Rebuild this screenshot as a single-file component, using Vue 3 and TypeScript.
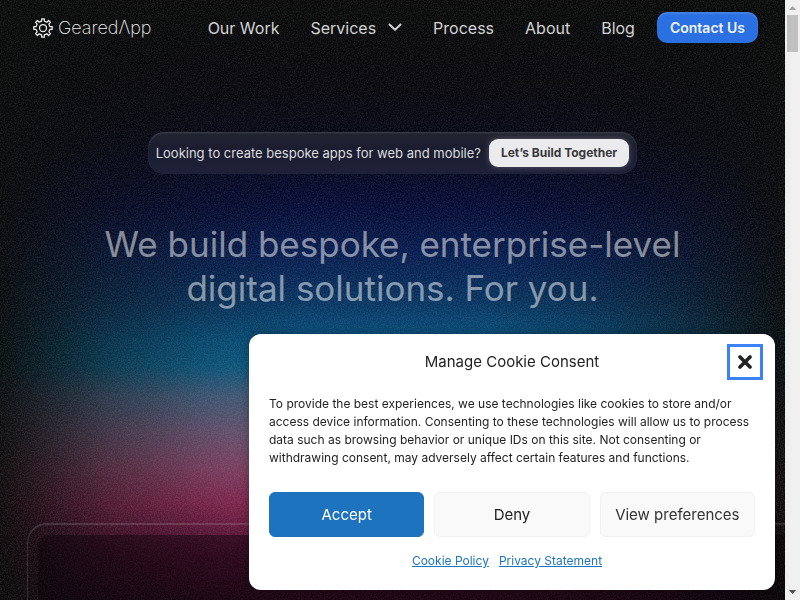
<script setup lang="ts">
import { ref } from 'vue'

interface NavItem {
  label: string
  menu?: boolean
}

const navItems: NavItem[] = [
  { label: 'Our Work' },
  { label: 'Services', menu: true },
  { label: 'Process' },
  { label: 'About' },
  { label: 'Blog' },
]

const consentOpen = ref(true)

// Outline of an eight-toothed cog centred in a 24 x 24 box.
function cogPath(teeth: number, outer: number, inner: number): string {
  const points: string[] = []
  const step = (Math.PI * 2) / teeth
  const at = (r: number, a: number) =>
    `${(12 + r * Math.sin(a)).toFixed(2)} ${(12 - r * Math.cos(a)).toFixed(2)}`
  for (let i = 0; i < teeth; i++) {
    const a = i * step
    points.push(at(inner, a - step * 0.25), at(outer, a - step * 0.18))
    points.push(at(outer, a + step * 0.18), at(inner, a + step * 0.25))
  }
  return `M${points.join('L')}Z`
}

const cog = cogPath(8, 11.2, 8.4)
</script>

<template>
  <div class="window">
    <div class="page">
      <svg class="grain" aria-hidden="true">
        <filter id="grain" color-interpolation-filters="sRGB">
          <feTurbulence type="fractalNoise" baseFrequency="0.7" numOctaves="3" stitchTiles="stitch" />
          <feColorMatrix values="0 0 0 0 1  0 0 0 0 1  0 0 0 0 1  3 0 0 0 -1.1" />
        </filter>
        <rect width="100%" height="100%" filter="url(#grain)" />
      </svg>

      <header class="topbar">
        <a class="brand" href="#">
          <svg class="cog" viewBox="0 0 24 24" aria-hidden="true">
            <path :d="cog" />
            <circle cx="12" cy="12" r="4.2" />
          </svg>
          <span>GearedΛpp</span>
        </a>
        <nav class="nav">
          <a v-for="item in navItems" :key="item.label" href="#">
            {{ item.label }}
            <svg v-if="item.menu" class="chevron" viewBox="0 0 14 9" aria-hidden="true">
              <path d="M1.5 1.5L7 6.8L12.5 1.5" />
            </svg>
          </a>
        </nav>
        <a class="contact" href="#">Contact Us</a>
      </header>

      <main class="hero">
        <div class="pill">
          <span>Looking to create bespoke apps for web and mobile?</span>
          <a class="pill-link" href="#">Let’s Build Together</a>
        </div>
        <h1>We build bespoke, enterprise-level<br />digital solutions. For you.</h1>
        <div class="showcase"><div class="showcase-screen"></div></div>
      </main>
    </div>

    <div class="scrollbar" aria-hidden="true">
      <svg viewBox="0 0 15 15"><path d="M4 10L7.5 6L11 10Z" fill="#a3a3a3" /></svg>
      <div class="thumb"></div>
      <svg viewBox="0 0 15 15"><path d="M4 5L7.5 9L11 5Z" fill="#505050" /></svg>
    </div>

    <section v-if="consentOpen" class="consent" role="dialog" aria-labelledby="consent-title">
      <div class="consent-head">
        <h2 id="consent-title">Manage Cookie Consent</h2>
        <button class="close" type="button" aria-label="Close dialog" @click="consentOpen = false">
          <svg viewBox="0 0 16 16" aria-hidden="true"><path d="M3 3L13 13M13 3L3 13" /></svg>
        </button>
      </div>
      <p>
        To provide the best experiences, we use technologies like cookies to store and/or access
        device information. Consenting to these technologies will allow us to process data such as
        browsing behavior or unique IDs on this site. Not consenting or withdrawing consent, may
        adversely affect certain features and functions.
      </p>
      <div class="choices">
        <button class="choice primary" type="button" @click="consentOpen = false">Accept</button>
        <button class="choice" type="button" @click="consentOpen = false">Deny</button>
        <button class="choice soft" type="button">View preferences</button>
      </div>
      <div class="policies">
        <a href="#">Cookie Policy</a>
        <a href="#">Privacy Statement</a>
      </div>
    </section>
  </div>
</template>

<style>
body {
  background: #0d0d0d;
}
</style>

<style scoped>
* {
  box-sizing: border-box;
}

.window {
  display: grid;
  grid-template-columns: minmax(0, 1fr) 15px;
  height: 100vh;
  overflow: hidden;
  font-family: Inter, "Liberation Sans", sans-serif;
}

.page {
  position: relative;
  display: flex;
  flex-direction: column;
  min-width: 0;
  overflow: hidden;
  background:
    linear-gradient(90deg, rgba(8, 9, 9, 0.94) 0%, rgba(8, 9, 9, 0.76) 5%, rgba(8, 9, 9, 0.44) 14%, rgba(8, 9, 9, 0.16) 26%, transparent 38%, transparent 62%, rgba(8, 9, 9, 0.16) 74%, rgba(8, 9, 9, 0.44) 86%, rgba(8, 9, 9, 0.76) 95%, rgba(8, 9, 9, 0.94) 100%),
    linear-gradient(180deg, #080908 0%, #07070c 14%, #050717 24%, #050b34 34%, #061c4e 42%, #07335f 50%, #06527e 57%, #0b5c86 61%, #455f80 66%, #6c5776 72%, #864468 78%, #882852 84%, #6c1a42 88%, #4c0d2e 93%, #2c081c 100%);
}

.grain {
  position: absolute;
  inset: 0;
  width: 100%;
  height: 100%;
  opacity: 0.07;
  pointer-events: none;
}

.topbar {
  position: relative;
  display: flex;
  align-items: center;
  padding: 12px 27px 0 33px;
}

.brand {
  display: flex;
  align-items: center;
  gap: 5px;
  color: #f0f0f0;
  font-weight: 200;
  font-size: 18px;
  line-height: 24px;
  text-decoration: none;
}

.cog {
  width: 20px;
  height: 20px;
  fill: none;
  stroke: #f0f0f0;
  stroke-width: 1.5;
  stroke-linejoin: round;
}

.nav {
  display: flex;
  gap: 31px;
  margin-left: auto;
  margin-right: 22px;
}

.nav a {
  display: flex;
  align-items: center;
  gap: 12px;
  color: #d3d3d3;
  font-size: 16px;
  line-height: 24px;
  text-decoration: none;
  white-space: nowrap;
}

.chevron {
  width: 14px;
  height: 9px;
  fill: none;
  stroke: #d3d3d3;
  stroke-width: 2;
  stroke-linecap: round;
  stroke-linejoin: round;
}

.contact {
  padding: 0 13px;
  border-radius: 10px;
  background: #2a70e2;
  box-shadow: inset 0 2px 2px rgba(255, 255, 255, 0.12);
  color: #eef3fc;
  font-size: 14px;
  font-weight: 600;
  line-height: 31px;
  text-decoration: none;
  white-space: nowrap;
}

.hero {
  position: relative;
  display: flex;
  flex: 1;
  flex-direction: column;
  align-items: center;
  padding-top: 89px;
}

.pill {
  display: flex;
  align-items: center;
  gap: 8px;
  padding: 7px 8px;
  border-radius: 16px;
  background: linear-gradient(180deg, #22242f 0%, #1b1d30 40%, #1e2138 100%);
  box-shadow: inset 0 1px 2px rgba(255, 255, 255, 0.14);
  color: #dcdcde;
  font-size: 13px;
  line-height: 28px;
  white-space: nowrap;
}

.pill-link {
  padding: 0 12px;
  border-radius: 9px;
  background: #ebebed;
  box-shadow: 0 0 6px rgba(255, 255, 255, 0.25);
  color: #38383c;
  font-size: 12px;
  font-weight: 700;
  text-decoration: none;
}

h1 {
  margin: 48px 0 0;
  color: rgba(255, 255, 255, 0.5);
  font-size: 35px;
  font-weight: 400;
  line-height: 44px;
  text-align: center;
}

.showcase {
  flex: 1;
  align-self: stretch;
  margin: 213px -27px -27px 27px;
  padding: 10px;
  border: 2px solid rgba(255, 255, 255, 0.13);
  border-left-width: 1px;
  border-radius: 20px;
}

.showcase-screen {
  height: 100%;
  border-radius: 12px;
  background: rgba(8, 0, 8, 0.4);
}

.scrollbar {
  display: flex;
  flex-direction: column;
  background: #f0f0f0;
}

.scrollbar svg {
  width: 15px;
  height: 15px;
}

.thumb {
  height: 37px;
  margin: 0 2px auto;
  background: #c0c0c0;
}

.consent {
  position: fixed;
  right: 25px;
  bottom: 10px;
  width: 526px;
  max-width: calc(100vw - 40px);
  padding: 10px 20px 20px;
  border-radius: 12px;
  background: #fff;
  box-shadow: 0 0 12px rgba(0, 0, 0, 0.35);
  color: #222;
}

.consent-head {
  display: grid;
  grid-template-columns: 28px 1fr 36px;
  align-items: center;
  margin-right: -8px;
}

h2 {
  grid-column: 2;
  margin: 0;
  font-size: 15px;
  font-weight: 400;
  line-height: 20px;
  text-align: center;
}

.close {
  display: grid;
  place-items: center;
  width: 36px;
  height: 36px;
  padding: 0;
  border: 3px solid #3b82f6;
  background: #fff;
}

.close svg {
  width: 16px;
  height: 16px;
  fill: none;
  stroke: #222;
  stroke-width: 3.6;
  stroke-linecap: round;
}

.consent p {
  margin: 15px 0 25px;
  font-size: 12px;
  line-height: 18px;
}

.choices {
  display: grid;
  grid-template-columns: repeat(3, 1fr);
  gap: 10px;
}

.choice {
  height: 45px;
  padding: 0;
  border: 1px solid #f0f0f0;
  border-radius: 6px;
  background: #f9f9f9;
  color: #222;
  font-family: inherit;
  font-size: 15px;
}

.choice.soft {
  color: #333;
}

.choice.primary {
  border-color: #1e73be;
  background: #1e73be;
  color: #fff;
}

.policies {
  display: flex;
  justify-content: center;
  gap: 10px;
  margin: 15px 10px 0 0;
  font-size: 12px;
  line-height: 18px;
}

.policies a {
  color: #1e73be;
}
</style>
